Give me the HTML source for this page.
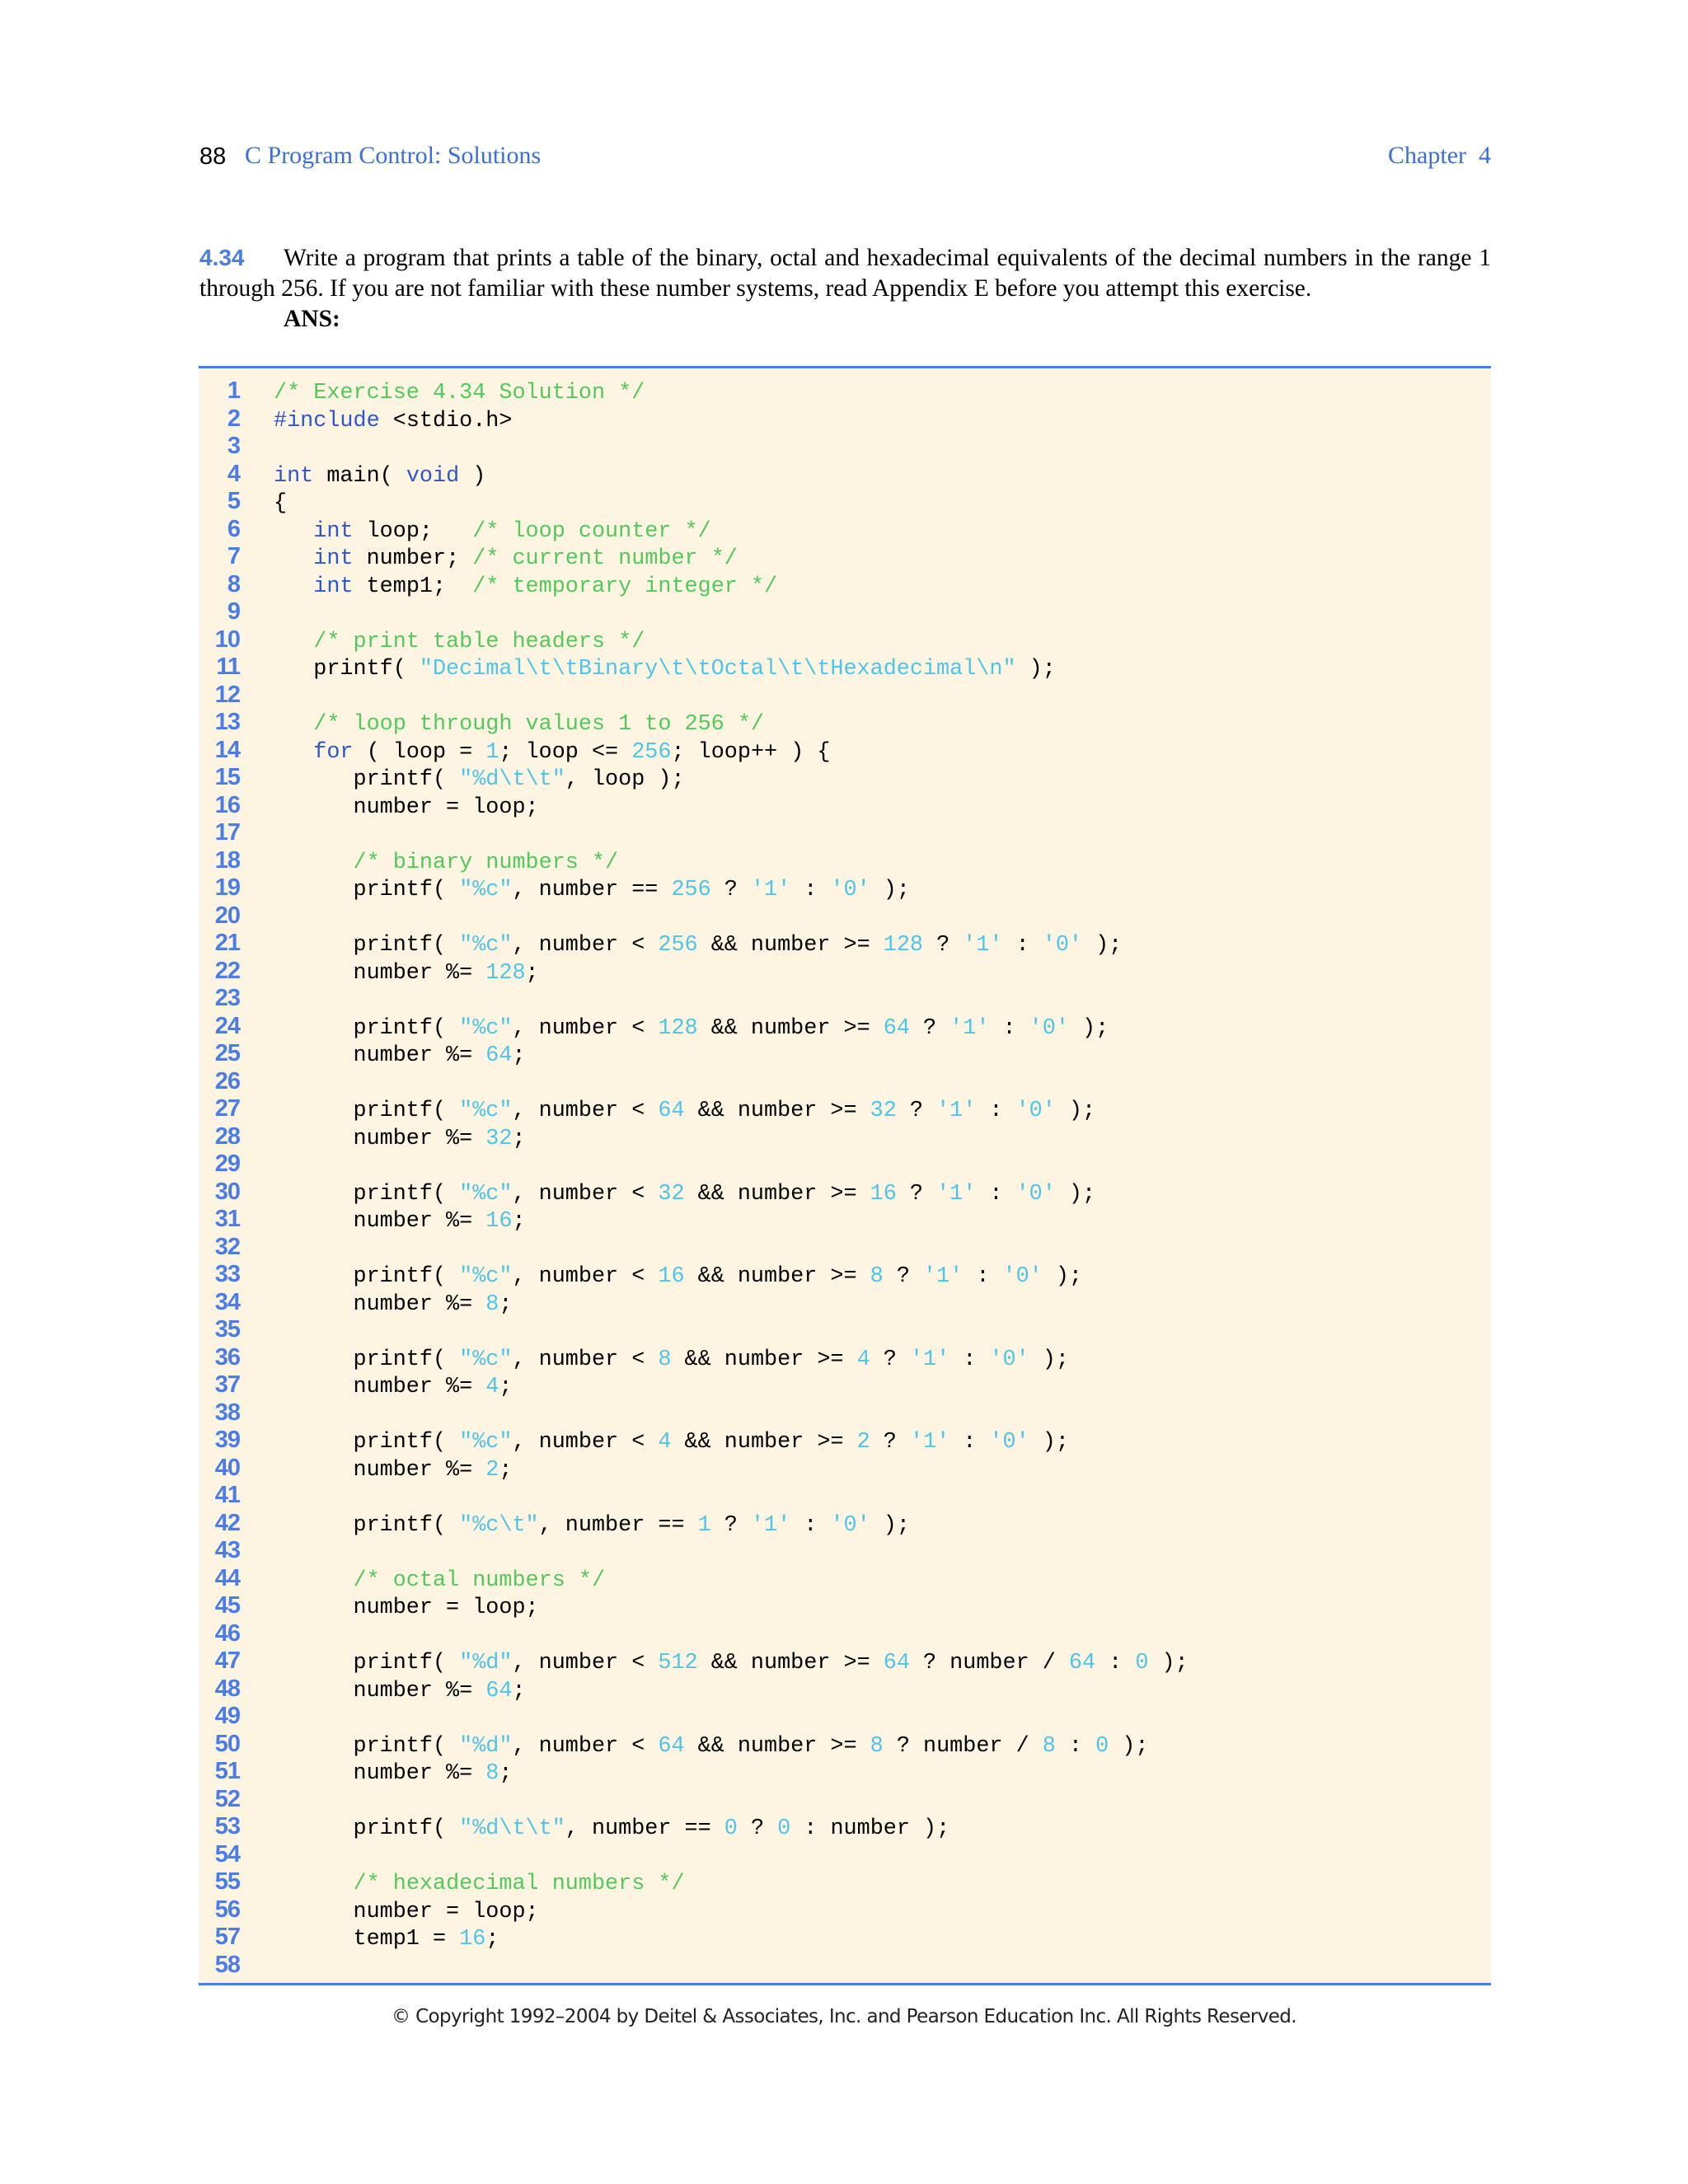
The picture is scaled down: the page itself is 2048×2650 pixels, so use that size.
<!DOCTYPE html>
<html><head><meta charset="utf-8"><style>
body{margin:0;background:#fff;width:2048px;height:2650px;position:relative;overflow:hidden}
.hd{position:absolute;top:172px;font-family:"Liberation Serif",serif;font-size:30px;color:#3b6fd8}
.p{position:absolute;left:242px;width:1567px;top:294px;font-family:"Liberation Serif",serif;font-size:29.5px;line-height:37px;text-align:justify;color:#000}
.box{position:absolute;left:241px;width:1568px;top:444px;height:1965px;background:#fdf5e2;border-top:3px solid #4a7de8;border-bottom:3px solid #4a7de8;box-sizing:border-box}
pre{margin:0;position:absolute;top:461px;font-size:26.8px;line-height:33.5px}
.n{left:200px;top:458px;width:91px;text-align:right;font-family:"Liberation Sans",sans-serif;font-weight:bold;color:#4a7de8;font-size:29px;letter-spacing:-1px}
.c{left:332px;font-family:"Liberation Mono",monospace;color:#000}
.cm{color:#52c95a}.kw{color:#2e56d0}.s{color:#4ec4ea}
.cp{position:absolute;top:2434px;left:0;width:2048px;text-align:center;font-family:"DejaVu Sans","Liberation Sans",sans-serif;font-size:23px;color:#222;letter-spacing:-0.6px}
</style></head><body>
<div class="hd" style="left:242px;color:#000;font-family:'Liberation Sans',sans-serif;font-size:29px;top:174px">88</div>
<div class="hd" style="left:297px">C Program Control: Solutions</div>
<div class="hd" style="right:239px">Chapter&nbsp; 4</div>
<div class="p"><span style="font-family:'Liberation Sans',sans-serif;font-weight:bold;color:#4a7de8;font-size:28px;display:inline-block;width:102px">4.34</span>Write a program that prints a table of the binary, octal and hexadecimal equivalents of the decimal numbers in the range 1 through 256. If you are not familiar with these number systems, read Appendix E before you attempt this exercise.<br><b style="margin-left:102px">ANS:</b></div>
<div class="box"></div>
<pre class="n">1
2
3
4
5
6
7
8
9
10
11
12
13
14
15
16
17
18
19
20
21
22
23
24
25
26
27
28
29
30
31
32
33
34
35
36
37
38
39
40
41
42
43
44
45
46
47
48
49
50
51
52
53
54
55
56
57
58</pre>
<pre class="c"><span class="cm">/* Exercise 4.34 Solution */</span>
<span class="kw">#include</span> &lt;stdio.h&gt;

<span class="kw">int</span> main( <span class="kw">void</span> )
{
   <span class="kw">int</span> loop;   <span class="cm">/* loop counter */</span>
   <span class="kw">int</span> number; <span class="cm">/* current number */</span>
   <span class="kw">int</span> temp1;  <span class="cm">/* temporary integer */</span>

   <span class="cm">/* print table headers */</span>
   printf( <span class="s">"Decimal\t\tBinary\t\tOctal\t\tHexadecimal\n"</span> );

   <span class="cm">/* loop through values 1 to 256 */</span>
   <span class="kw">for</span> ( loop = <span class="s">1</span>; loop &lt;= <span class="s">256</span>; loop++ ) {
      printf( <span class="s">"%d\t\t"</span>, loop );
      number = loop;

      <span class="cm">/* binary numbers */</span>
      printf( <span class="s">"%c"</span>, number == <span class="s">256</span> ? <span class="s">'1'</span> : <span class="s">'0'</span> );

      printf( <span class="s">"%c"</span>, number &lt; <span class="s">256</span> &amp;&amp; number &gt;= <span class="s">128</span> ? <span class="s">'1'</span> : <span class="s">'0'</span> );
      number %= <span class="s">128</span>;

      printf( <span class="s">"%c"</span>, number &lt; <span class="s">128</span> &amp;&amp; number &gt;= <span class="s">64</span> ? <span class="s">'1'</span> : <span class="s">'0'</span> );
      number %= <span class="s">64</span>;

      printf( <span class="s">"%c"</span>, number &lt; <span class="s">64</span> &amp;&amp; number &gt;= <span class="s">32</span> ? <span class="s">'1'</span> : <span class="s">'0'</span> );
      number %= <span class="s">32</span>;

      printf( <span class="s">"%c"</span>, number &lt; <span class="s">32</span> &amp;&amp; number &gt;= <span class="s">16</span> ? <span class="s">'1'</span> : <span class="s">'0'</span> );
      number %= <span class="s">16</span>;

      printf( <span class="s">"%c"</span>, number &lt; <span class="s">16</span> &amp;&amp; number &gt;= <span class="s">8</span> ? <span class="s">'1'</span> : <span class="s">'0'</span> );
      number %= <span class="s">8</span>;

      printf( <span class="s">"%c"</span>, number &lt; <span class="s">8</span> &amp;&amp; number &gt;= <span class="s">4</span> ? <span class="s">'1'</span> : <span class="s">'0'</span> );
      number %= <span class="s">4</span>;

      printf( <span class="s">"%c"</span>, number &lt; <span class="s">4</span> &amp;&amp; number &gt;= <span class="s">2</span> ? <span class="s">'1'</span> : <span class="s">'0'</span> );
      number %= <span class="s">2</span>;

      printf( <span class="s">"%c\t"</span>, number == <span class="s">1</span> ? <span class="s">'1'</span> : <span class="s">'0'</span> );

      <span class="cm">/* octal numbers */</span>
      number = loop;

      printf( <span class="s">"%d"</span>, number &lt; <span class="s">512</span> &amp;&amp; number &gt;= <span class="s">64</span> ? number / <span class="s">64</span> : <span class="s">0</span> );
      number %= <span class="s">64</span>;

      printf( <span class="s">"%d"</span>, number &lt; <span class="s">64</span> &amp;&amp; number &gt;= <span class="s">8</span> ? number / <span class="s">8</span> : <span class="s">0</span> );
      number %= <span class="s">8</span>;

      printf( <span class="s">"%d\t\t"</span>, number == <span class="s">0</span> ? <span class="s">0</span> : number );

      <span class="cm">/* hexadecimal numbers */</span>
      number = loop;
      temp1 = <span class="s">16</span>;
</pre>
<div class="cp">© Copyright 1992–2004 by Deitel &amp; Associates, Inc. and Pearson Education Inc. All Rights Reserved.</div>
</body></html>
